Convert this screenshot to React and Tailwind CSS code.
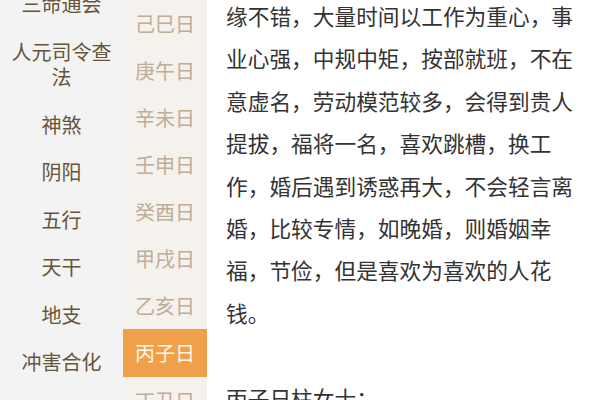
import React from "react";

const topics = [
  "三命通会",
  "人元司令查法",
  "神煞",
  "阴阳",
  "五行",
  "天干",
  "地支",
  "冲害合化",
  "纳音",
];

const days = [
  "己巳日",
  "庚午日",
  "辛未日",
  "壬申日",
  "癸酉日",
  "甲戌日",
  "乙亥日",
  "丙子日",
  "丁丑日",
];

const body =
  "缘不错，大量时间以工作为重心，事业心强，中规中矩，按部就班，不在意虚名，劳动模范较多，会得到贵人提拔，福将一名，喜欢跳槽，换工作，婚后遇到诱惑再大，不会轻言离婚，比较专情，如晚婚，则婚姻幸福，节俭，但是喜欢为喜欢的人花钱。";

export default function App() {
  return (
    <div
      className="flex h-[400px] w-[600px] overflow-hidden bg-white"
      style={{ fontFamily: '"Noto Sans CJK SC", "Noto Sans", sans-serif' }}
    >
      {/* topic list */}
      <div className="w-[123px] shrink-0 bg-[#f3f3f3]">
        <div className="-mt-[20px]">
          {topics.map((t) => (
            <div
              key={t}
              className="px-[10px] py-[11px] text-center text-[20px] leading-[25.5px] text-[#66553a]"
            >
              {t}
            </div>
          ))}
        </div>
      </div>

      {/* day list */}
      <div className="w-[84px] shrink-0 bg-[#f5f1ec]">
        {days.map((d) => {
          const active = d === "丙子日";
          return (
            <div
              key={d}
              className={
                active
                  ? "flex h-[48px] items-center justify-center bg-[#f0a04b] text-[20px] text-[#fff6e8]"
                  : "flex h-[47px] items-center justify-center text-[20px] text-[#bfad99]"
              }
            >
              {d}
            </div>
          );
        })}
      </div>

      {/* content */}
      <div className="flex-1 pl-[19px]">
        <div className="-mt-[5px] w-[352px] text-[21.7px] leading-[42.4px] text-[#333333]">
          <p>{body}</p>
          <p className="mt-[42.4px]">丙子日柱女士：</p>
        </div>
      </div>
    </div>
  );
}
